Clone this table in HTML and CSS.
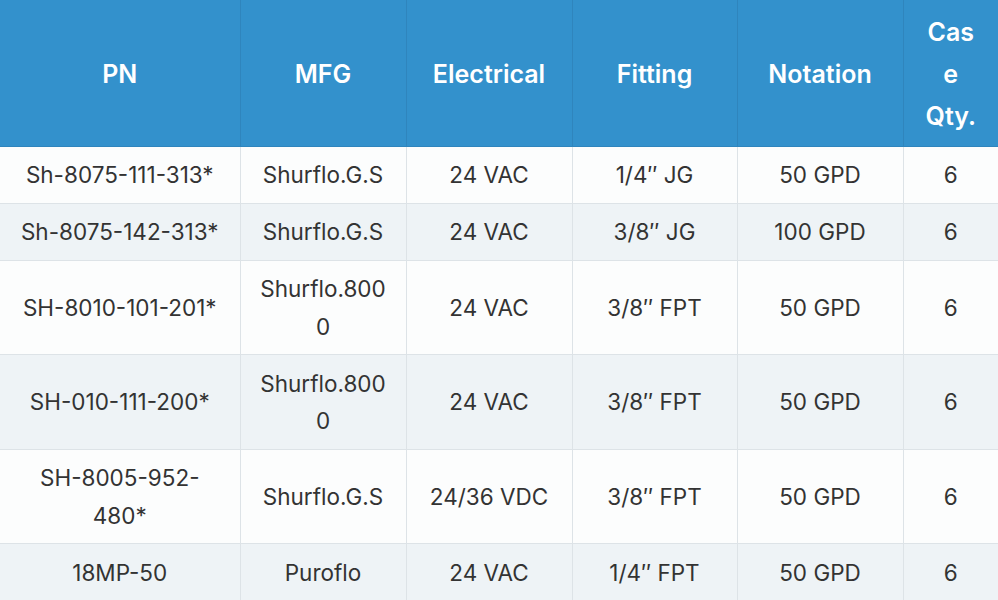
FILE: index.html
```html
<!DOCTYPE html>
<html lang="en">
<head>
<meta charset="utf-8">
<title>Pumps</title>
<link rel="stylesheet" href="styles.css">
</head>
<body>
<table class="spec-table">
  <colgroup>
    <col class="c-pn"><col class="c-mid"><col class="c-mid"><col class="c-fit"><col class="c-mid"><col class="c-qty">
  </colgroup>
  <thead>
    <tr>
      <th>PN</th>
      <th>MFG</th>
      <th>Electrical</th>
      <th>Fitting</th>
      <th>Notation</th>
      <th>Cas<br>e<br>Qty.</th>
    </tr>
  </thead>
  <tbody>
    <tr>
      <td>Sh-8075-111-313*</td>
      <td>Shurflo.G.S</td>
      <td>24 VAC</td>
      <td>1/4″ JG</td>
      <td>50 GPD</td>
      <td>6</td>
    </tr>
    <tr>
      <td>Sh-8075-142-313*</td>
      <td>Shurflo.G.S</td>
      <td>24 VAC</td>
      <td>3/8″ JG</td>
      <td>100 GPD</td>
      <td>6</td>
    </tr>
    <tr>
      <td>SH-8010-101-201*</td>
      <td>Shurflo.800<br>0</td>
      <td>24 VAC</td>
      <td>3/8″ FPT</td>
      <td>50 GPD</td>
      <td>6</td>
    </tr>
    <tr>
      <td>SH-010-111-200*</td>
      <td>Shurflo.800<br>0</td>
      <td>24 VAC</td>
      <td>3/8″ FPT</td>
      <td>50 GPD</td>
      <td>6</td>
    </tr>
    <tr>
      <td>SH-8005-952-<br>480*</td>
      <td>Shurflo.G.S</td>
      <td>24/36 VDC</td>
      <td>3/8″ FPT</td>
      <td>50 GPD</td>
      <td>6</td>
    </tr>
    <tr>
      <td>18MP-50</td>
      <td>Puroflo</td>
      <td>24 VAC</td>
      <td>1/4″ FPT</td>
      <td>50 GPD</td>
      <td>6</td>
    </tr>
  </tbody>
</table>
</body>
</html>
```
FILE: styles.css
```css
html, body {
  margin: 0;
  padding: 0;
  background: #ffffff;
}
body {
  font-family: Inter, "Liberation Sans", sans-serif;
  color: #333333;
}
.spec-table {
  width: 998px;
  border-collapse: collapse;
  table-layout: fixed;
}
.c-pn { width: 240px; }
.c-mid { width: 166px; }
.c-fit { width: 165px; }
.c-qty { width: 95px; }
.spec-table th {
  background: #3391cc;
  color: #ffffff;
  font-weight: 600;
  font-size: 25px;
  line-height: 42px;
  padding: 11px 4px 9px;
  text-align: center;
  border-left: 1px solid #2f85bd;
  border-bottom: 1px solid #2f85bd;
}
.spec-table td {
  font-size: 22.5px;
  line-height: 37.4px;
  padding: 9.3px 4px;
  text-align: center;
  border-left: 1px solid #dde3e7;
  border-bottom: 1px solid #dde3e7;
}
.spec-table th:first-child,
.spec-table td:first-child {
  border-left: none;
}
.spec-table tbody tr:nth-child(odd) td {
  background: #fcfdfd;
}
.spec-table tbody tr:nth-child(even) td {
  background: #eef3f6;
}
```
